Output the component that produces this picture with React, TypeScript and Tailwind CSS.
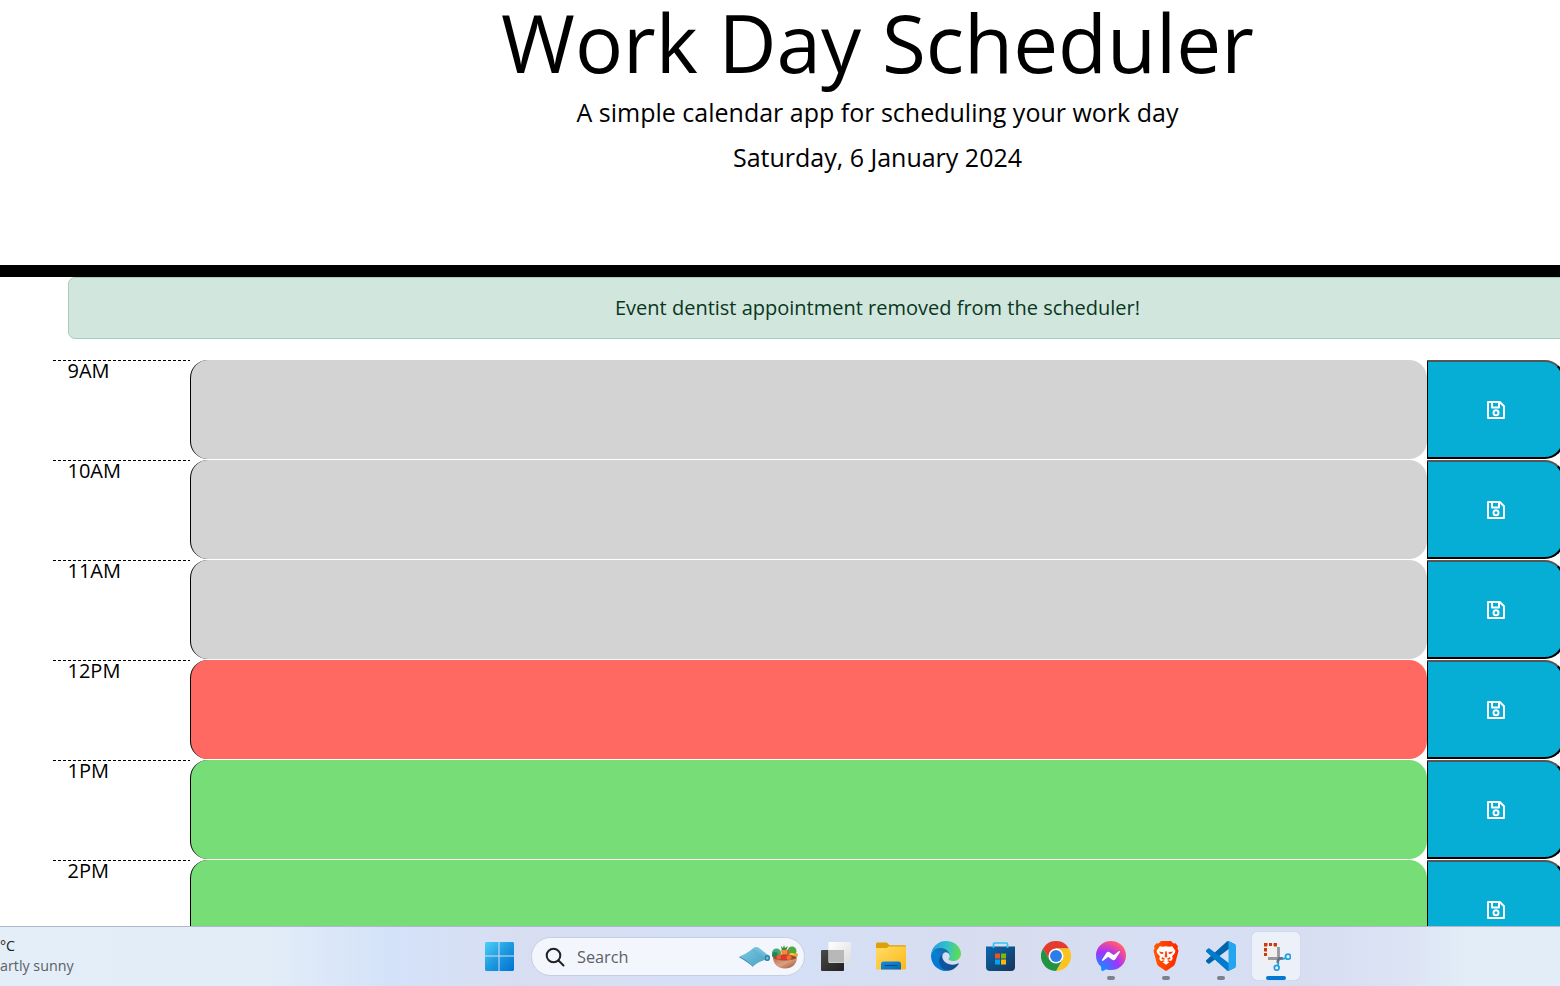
import React from "react";

const hours = [
  { label: "9AM", tone: "bg-[#d3d3d3]" },
  { label: "10AM", tone: "bg-[#d3d3d3]" },
  { label: "11AM", tone: "bg-[#d3d3d3]" },
  { label: "12PM", tone: "bg-[#ff6961]" },
  { label: "1PM", tone: "bg-[#77dd77]" },
  { label: "2PM", tone: "bg-[#77dd77]" },
];

function SaveIcon() {
  return (
    <svg width="18" height="18" viewBox="0 0 18 18" fill="none" stroke="currentColor" strokeWidth="2" strokeLinejoin="round">
      <path d="M1 1h11.800L17 5.200V17H1z" />
      <path d="M5 1.500v5h7v-5" />
      <circle cx="9" cy="11.700" r="2.500" />
    </svg>
  );
}

function TimeBlock({ label, tone }: { label: string; tone: string }) {
  return (
    <div className="flex h-[100px] w-[1650px] shrink-0">
      <div className="flex w-[137px] flex-col">
        <svg className="h-px w-[137px] shrink-0" viewBox="0 0 137 1" shapeRendering="crispEdges">
          <path d="M0 .5H137" stroke="#000" strokeDasharray="3 2" />
        </svg>
        <div className="pl-[14.5px] text-[20px] leading-[20px]">{label}</div>
      </div>
      <div className={`h-[99px] w-[1237px] rounded-[18px] border-l border-black ${tone}`} />
      <button className="flex h-[99px] w-[137px] items-center justify-center rounded-r-[19px] border-y-2 border-r-2 border-l border-t-[#555] border-r-black border-b-black border-l-black bg-[#06aed5] pl-[2px] text-white">
        <SaveIcon />
      </button>
    </div>
  );
}

function WindowsIcon() {
  return (
    <svg width="30" height="30" viewBox="0 0 30 30">
      <defs>
        <linearGradient id="win" x1="0" y1="0" x2="30" y2="30" gradientUnits="userSpaceOnUse">
          <stop stopColor="#4fd4fb" />
          <stop offset=".5" stopColor="#209bdf" />
          <stop offset="1" stopColor="#0072d4" />
        </linearGradient>
      </defs>
      <path fill="url(#win)" d="M2 1H14.500v13.500H1V2zM15.500 1H29l1 1v12.500H15.500zM1 15.500h13.500V30H2l-1-1zM15.500 15.500H30V29l-1 1H15.500z" />
    </svg>
  );
}

function YogaMatIcon() {
  return (
    <svg width="32" height="22" viewBox="0 0 32 22" className="shrink-0">
      <defs>
        <linearGradient id="mat" x1="0" y1="0" x2="1" y2="1">
          <stop stopColor="#78cbe4" />
          <stop offset="1" stopColor="#4aa0c2" />
        </linearGradient>
        <linearGradient id="roll" x1="0" y1="1" x2=".6" y2="0">
          <stop stopColor="#3a8fb3" />
          <stop offset="1" stopColor="#86d3ea" />
        </linearGradient>
      </defs>
      <path fill="url(#mat)" d="M.5 10.500C5 9 9.500 6 14 2.500L26.500 14c-4 .5-8.500 3-12.500 6.500-3-4-8-7.500-13.500-10" />
      <path fill="#2f83aa" d="M.5 10.500C6 13 11 16.500 14 20.200v.8C11 18 5 14 .5 11.500z" />
      <path fill="url(#roll)" d="M13.500 5c-.5-3.500 3-5 6-3.500L30 9.800c2 1.700.5 5.200-2.500 5.200z" />
      <ellipse cx="28.300" cy="12" rx="2.700" ry="3" fill="#2f7fa5" />
      <ellipse cx="28.300" cy="12" rx="1.300" ry="1.600" fill="#6fc1db" />
    </svg>
  );
}

function BowlIcon() {
  return (
    <svg width="28" height="24" viewBox="0 0 28 24" className="shrink-0">
      <defs>
        <linearGradient id="bowl" x1="0" y1="0" x2="1" y2="1">
          <stop stopColor="#b76e50" />
          <stop offset=".5" stopColor="#dca080" />
          <stop offset="1" stopColor="#8f4e38" />
        </linearGradient>
      </defs>
      <circle cx="5.500" cy="8" r="4.500" fill="#3dab78" />
      <circle cx="4" cy="10" r="3" fill="#248657" />
      <path d="m10 1 2 2 1-3 1 3 3-2-2 5h-4z" fill="#468c2e" />
      <path d="m10 5 6 0-1 8h-4z" fill="#f18b35" />
      <circle cx="21" cy="6" r="4.500" fill="#50a83f" />
      <path d="M16 5h2v7h-3z" fill="#e45736" />
      <circle cx="21" cy="11" r="3" fill="#ffd329" />
      <circle cx="25" cy="10" r="2" fill="#edaa21" />
      <path fill="url(#bowl)" d="M2 12h24c0 7-5 11.500-12 11.500S2 19 2 12" />
      <ellipse cx="14" cy="12.500" rx="11.500" ry="3" fill="#a04a33" />
      <circle cx="8" cy="12" r="2.500" fill="#ef5b35" />
      <circle cx="13" cy="12.500" r="2.700" fill="#df3928" />
      <circle cx="18" cy="12.500" r="2.500" fill="#f36a3b" />
    </svg>
  );
}

function TaskViewIcon() {
  return (
    <svg width="30" height="29" viewBox="0 0 30 29">
      <defs>
        <linearGradient id="tvd" x1="0" y1="0" x2="1" y2="1">
          <stop stopColor="#494949" />
          <stop offset="1" stopColor="#202020" />
        </linearGradient>
        <linearGradient id="tvl" x1="0" y1="0" x2="1" y2="1">
          <stop stopColor="#fff" />
          <stop offset="1" stopColor="#dcdcdc" />
        </linearGradient>
      </defs>
      <rect x="0" y="8" width="23" height="21" rx="1" fill="url(#tvd)" />
      <rect x="7.500" y="0" width="22.500" height="21" rx="1" fill="url(#tvl)" />
      <path d="M7.500 8H23v12.500H8.500l-1-1z" fill="#b8b8b8" />
    </svg>
  );
}

function FolderIcon() {
  return (
    <svg width="30" height="28" viewBox="0 0 30 28">
      <defs>
        <linearGradient id="fold" x1="0" y1="0" x2="1" y2="1">
          <stop stopColor="#ffdc69" />
          <stop offset="1" stopColor="#fdb813" />
        </linearGradient>
        <linearGradient id="foldb" x1="0" y1="0" x2="1" y2="1">
          <stop stopColor="#168be0" />
          <stop offset="1" stopColor="#0567b8" />
        </linearGradient>
      </defs>
      <path d="M0 2a1.500 1.500 0 0 1 1.500-1.500h8.300c1 0 1.700.5 2.500 1.500l1.200 1.300h15A1.500 1.500 0 0 1 30 5v3H0z" fill="#dda006" />
      <path d="M0 6h9.500c1.500 0 2-.5 3-1.500H30v22a1 1 0 0 1-1 1H1a1 1 0 0 1-1-1z" fill="url(#fold)" />
      <path d="M5 27.500V22a2.500 2.500 0 0 1 2.500-2.500h15A2.500 2.500 0 0 1 25 22v5.500z" fill="url(#foldb)" />
      <path d="M9 23.500h12" stroke="#06477e" strokeLinecap="round" />
    </svg>
  );
}

function EdgeIcon() {
  return (
    <svg width="30" height="30" viewBox="0 0 256 256">
      <defs>
        <linearGradient id="ea" x1="60" y1="177" x2="240" y2="177" gradientUnits="userSpaceOnUse">
          <stop stopColor="#0c59a4" />
          <stop offset="1" stopColor="#114a8b" />
        </linearGradient>
        <linearGradient id="eb" x1="150" y1="90" x2="45" y2="220" gradientUnits="userSpaceOnUse">
          <stop stopColor="#1767a8" />
          <stop offset=".5" stopColor="#0a80d0" />
          <stop offset="1" stopColor="#0078d4" />
        </linearGradient>
        <linearGradient id="ec" x1="10" y1="60" x2="245" y2="100" gradientUnits="userSpaceOnUse">
          <stop stopColor="#279fe0" />
          <stop offset=".5" stopColor="#30c1cc" />
          <stop offset="1" stopColor="#5fdc55" />
        </linearGradient>
      </defs>
      <path fill="url(#ea)" d="M231 190.500a93 93 0 0 1-10.500 4.700 102 102 0 0 1-36 6.500c-47.400 0-88.700-32.600-88.700-74.500a31.600 31.600 0 0 1 16.400-27.300c-42.900 1.800-54 46.500-54 72.700 0 74 68.300 81.600 83 81.600 7.900 0 19.800-2.300 27-4.600l1.300-.4a128 128 0 0 0 66.600-52.800 4 4 0 0 0-5.100-5.900z" />
      <path fill="url(#eb)" d="M105.700 241.400a79 79 0 0 1-22.700-21.300A80.700 80.700 0 0 1 112.200 100c3.100-1.500 8.500-4.200 15.600-4a32.400 32.400 0 0 1 25.700 13 31.900 31.900 0 0 1 6.300 18.700c0-.2 24.500-79.600-80-79.600C35.900 48 0 89.900 0 126.500A130 130 0 0 0 12 182.200a128 128 0 0 0 156.400 67 75.400 75.400 0 0 1-62.600-7.800z" />
      <path fill="url(#ec)" d="M152.300 148.900c-.9 1-3.400 2.500-3.400 5.600 0 2.600 1.700 5.200 4.800 7.300 14.300 10 41.400 8.600 41.500 8.600a59.600 59.600 0 0 0 30.300-8.300A61.400 61.400 0 0 0 256 109.300c.3-22.400-8-37.300-11.300-43.900C223.500 23.900 177.700 0 128 0A128 128 0 0 0 0 126.200c.5-36.500 36.800-66 80-66 3.500 0 23.500.3 42 10.100 16.300 8.600 24.900 18.900 30.800 29.200 6.200 10.700 7.300 24.100 7.300 29.500s-2.700 13.300-7.800 19.900z" />
    </svg>
  );
}

function StoreIcon() {
  return (
    <svg width="30" height="30" viewBox="0 0 30 30">
      <defs>
        <linearGradient id="store" x1="0" y1="0" x2="1" y2="1">
          <stop stopColor="#0868af" />
          <stop offset="1" stopColor="#173359" />
        </linearGradient>
      </defs>
      <path d="M0 5.500h29V26a4 4 0 0 1-4 4H4a4 4 0 0 1-4-4z" fill="url(#store)" />
      <path d="M7.500 7V3a1 1 0 0 1 1-1h12a1 1 0 0 1 1 1v4" fill="none" stroke="#2cc3f2" strokeWidth="1.700" />
      <path fill="#f25022" d="M9 12.500h5v5H9z" />
      <path fill="#7fba00" d="M15 12.500h5v5h-5z" />
      <path fill="#00a4ef" d="M9 18.500h5v5H9z" />
      <path fill="#ffb900" d="M15 18.500h5v5h-5z" />
    </svg>
  );
}

function ChromeIcon() {
  return (
    <svg width="30" height="30" viewBox="0 0 48 48">
      <path fill="#e33b2e" d="M24 12h20.800A24 24 0 0 0 3.200 12l10.400 18z" />
      <path fill="#fcc31e" d="M34.400 30 24 48a24 24 0 0 0 20.800-36H24z" />
      <path fill="#229342" d="M13.600 30 3.200 12A24 24 0 0 0 24 48l10.400-18z" />
      <circle cx="24" cy="24" r="12" fill="#fff" />
      <circle cx="24" cy="24" r="9.500" fill="#2b7de9" />
    </svg>
  );
}

function MessengerIcon() {
  return (
    <svg width="30" height="30" viewBox="0 0 30 30">
      <defs>
        <radialGradient id="msg" cx="5" cy="29" r="33" gradientUnits="userSpaceOnUse">
          <stop stopColor="#0099ff" />
          <stop offset=".55" stopColor="#a033ff" />
          <stop offset=".9" stopColor="#ff5280" />
          <stop offset="1" stopColor="#ff7061" />
        </radialGradient>
      </defs>
      <path fill="url(#msg)" d="M15 0C6.500 0 0 6.200 0 14.500c0 4.400 1.800 8.200 4.700 10.800.2.200.4.500.4.900l.1 2.600c0 .9.900 1.400 1.600 1.100l3-1.300c.3-.1.500-.1.800-.1 1.400.4 2.800.6 4.400.6 8.500 0 15-6.200 15-14.500S23.500 0 15 0" />
      <path fill="#fff" d="m6 18.800 4.400-7c.7-1.100 2.200-1.400 3.200-.6l3.500 2.600c.3.200.7.200 1 0l4.700-3.600c.6-.5 1.500.3 1 1l-4.400 7c-.7 1.100-2.200 1.400-3.200.6l-3.500-2.600c-.3-.2-.7-.2-1 0L7 19.800c-.6.500-1.400-.3-1-1" />
    </svg>
  );
}

function BraveIcon() {
  return (
    <svg width="26" height="30" viewBox="0 0 26 30">
      <defs>
        <linearGradient id="brave" x1="0" y1="0" x2="26" y2="0" gradientUnits="userSpaceOnUse">
          <stop stopColor="#ff5a00" />
          <stop offset="1" stopColor="#ff2400" />
        </linearGradient>
      </defs>
      <path fill="url(#brave)" d="M8 0h10l2.500 2.600 2-.4L25 5.200l-.6 1.800L25.500 10l-3.300 12.200c-.4 1.500-1.200 2.500-2.400 3.400L14 29.500q-1 .7-2 0l-5.800-3.900c-1.200-.9-2-1.900-2.400-3.400L.5 10l1.100-3L1 5.200l2.500-3 2 .4z" />
      <path fill="#fff" d="m6.800 5.200 3 .6L13 5.200l3.200.6 3-.6 3.200 4.500-.5 2.300-2.800 3.200.6 2.600-1.700 2.300-2.600-.9L13 21l-2.400-1.700-2.600.9-1.700-2.300.6-2.600L4.100 12l-.5-2.300z" />
      <path fill="#ff4210" d="m5.800 10.500 4.800.7-.6 1.800-2.300-.2zm14.400 0-4.800.7.600 1.800 2.300-.2zM12.300 10.300h1.400l.6 5.500-1.300.9-1.300-.9zM9 16l3.400 1.900-1.800.8-2.200-.6zm8 0-3.400 1.900 1.800.8 2.200-.6z" />
      <path fill="#fff" d="m9.600 21.200 3.400-1.700 3.400 1.700-3.400 2.600z" />
    </svg>
  );
}

function CodeIcon() {
  return (
    <svg width="30" height="30" viewBox="0 0 100 100">
      <path fill="#0065a9" d="m96.500 10.800-20.600-9.900a6.200 6.200 0 0 0-7.100 1.200L1.300 63.600a4.200 4.200 0 0 0 0 6.200l5.500 5a4.200 4.200 0 0 0 5.300.2l81.200-61.600c2.700-2.100 6.600-.1 6.600 3.300v-.2a6.300 6.300 0 0 0-3.400-5.700" />
      <path fill="#007acc" d="m96.500 89.200-20.600 9.900a6.200 6.200 0 0 1-7.100-1.200L1.300 36.400a4.200 4.200 0 0 1 0-6.200l5.500-5a4.200 4.200 0 0 1 5.300-.2l81.200 61.600c2.700 2.100 6.600.1 6.600-3.300v.2a6.300 6.300 0 0 1-3.400 5.700" />
      <path fill="#24a5ef" d="M75.900 99.100a6.200 6.200 0 0 1-7.100-1.200c2.300 2.300 6.200.7 6.200-2.600V4.700c0-3.300-3.900-4.900-6.200-2.600A6.200 6.200 0 0 1 75.900.9l20.600 9.900a6.300 6.300 0 0 1 3.500 5.700v67a6.300 6.300 0 0 1-3.500 5.700z" />
    </svg>
  );
}

function SnipIcon() {
  return (
    <svg width="30" height="30" viewBox="0 0 30 30">
      <path d="M1 5h17v17H1z" fill="#f3efec" />
      <path fill="#c93b13" d="M3 2h3.500v3H6v.5H3zM8 2h3v3H8zM12.500 2h3.500v3.500h-3V5h-.5zM3 7h3v3.500H3zM3 12h3v3H3z" />
      <path d="M17.500 6v14M7 17.500h15" stroke="#959a9f" strokeWidth="2.800" />
      <path d="m17 17.500 4.500-.3M17.300 18l-.8 4" stroke="#676c71" strokeWidth="2.400" />
      <circle cx="27" cy="15.700" r="2.500" fill="none" stroke="#26a0e2" strokeWidth="1.800" />
      <circle cx="15.700" cy="26.800" r="2.400" fill="none" stroke="#26a0e2" strokeWidth="1.800" />
      <path d="m21 18 4-.8M17.500 21l-.6 4" stroke="#26a0e2" strokeWidth="1.800" />
    </svg>
  );
}

function TaskItem({ children, running, active }: { children: React.ReactNode; running?: boolean; active?: boolean }) {
  return (
    <div className="flex w-[55px] shrink-0 justify-center pt-[5px]">
      <div
        className={
          active
            ? "relative flex h-12 w-12 items-center justify-center rounded-[5px] bg-[#ebf0f9] shadow-[0_0_1px_#abb6cc]"
            : "relative flex h-12 w-12 items-center justify-center"
        }
      >
        {children}
        {running && <span className="absolute bottom-0 left-5 h-1 w-2 rounded-full bg-[#7b818d]" />}
        {active && <span className="absolute bottom-0 left-[14px] h-1 w-5 rounded-full bg-[#0078d4]" />}
      </div>
    </div>
  );
}

export default function App() {
  return (
    <div className="flex h-[986px] w-[1560px] flex-col overflow-hidden bg-white font-['Open_Sans',sans-serif] text-black">
      <main className="flex h-[926px] shrink-0 flex-col overflow-hidden">
        <header className="flex h-[277px] w-[1755px] shrink-0 flex-col items-center border-b-[12px] border-black">
          <h1 className="text-[80px] leading-[84px] whitespace-nowrap">Work Day Scheduler</h1>
          <p className="mt-[9px] text-[25px] leading-[38px] whitespace-nowrap">A simple calendar app for scheduling your work day</p>
          <p className="mt-[7px] text-[25px] leading-[38px] whitespace-nowrap">Saturday, 6 January 2024</p>
        </header>
        <div className="ml-[68px] flex h-[62px] w-[1619px] shrink-0 items-center justify-center rounded-[7px] border border-[#a3cfbb] bg-[#d1e7dd] text-[20px] text-[#0a3622]">
          <span>Event dentist appointment removed from the scheduler!</span>
        </div>
        <section className="mt-[21px] ml-[53px] flex flex-col">
          {hours.map((h) => (
            <TimeBlock key={h.label} {...h} />
          ))}
        </section>
      </main>
      <footer className="flex h-[60px] shrink-0 border-t border-[#afb8ca] bg-[linear-gradient(90deg,#e3eef8_0%,#e3edf8_17%,#d4e2f9_25%,#d8def2_33%,#d4e0f7_48%,#d6def2_57%,#d8dcef_65%,#d6dff4_75%,#d8def2_84%,#dce3f4_90%,#e2edf7_94%,#e3edf8_100%)]">
        <div className="w-[471px] shrink-0 pt-[9px] text-[14.3px] leading-5 whitespace-nowrap">
          <div className="text-[#222]">°C</div>
          <div className="text-[#5c6066]">artly sunny</div>
        </div>
        <TaskItem><WindowsIcon /></TaskItem>
        <div className="mt-[10px] mr-[3px] ml-[5px] flex h-[39px] w-[274px] shrink-0 items-center rounded-full border border-[#c6cee2] bg-[#f3f6fd] pl-[13px]">
          <svg width="20" height="20" viewBox="0 0 20 20" fill="none" stroke="#222" strokeWidth="2" strokeLinecap="round">
            <circle cx="8.500" cy="8.500" r="6.800" />
            <path d="m13.500 13.500 5 5" />
          </svg>
          <span className="ml-3 w-[162px] pt-px text-[16.3px] text-[#5d6068]">Search</span>
          <YogaMatIcon />
          <BowlIcon />
        </div>
        <TaskItem><TaskViewIcon /></TaskItem>
        <TaskItem><FolderIcon /></TaskItem>
        <TaskItem><EdgeIcon /></TaskItem>
        <TaskItem><StoreIcon /></TaskItem>
        <TaskItem><ChromeIcon /></TaskItem>
        <TaskItem running><MessengerIcon /></TaskItem>
        <TaskItem running><BraveIcon /></TaskItem>
        <TaskItem running><CodeIcon /></TaskItem>
        <TaskItem active><SnipIcon /></TaskItem>
      </footer>
    </div>
  );
}
